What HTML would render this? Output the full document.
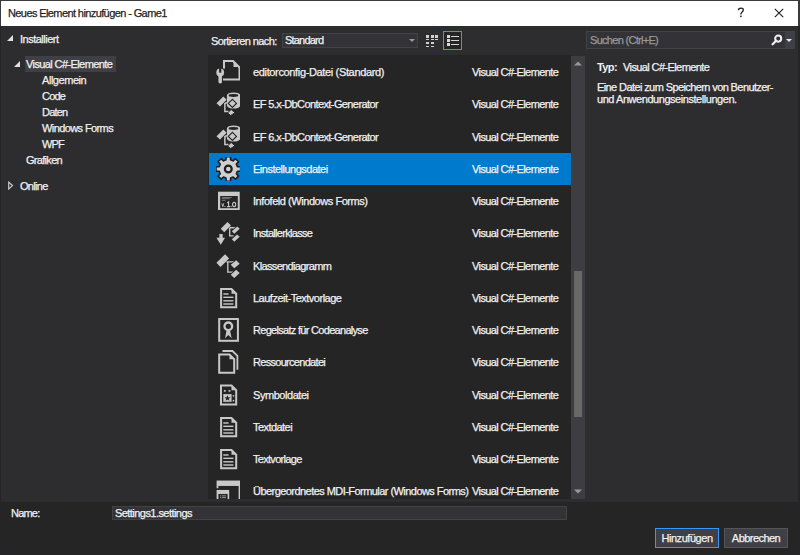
<!DOCTYPE html>
<html><head><meta charset="utf-8"><style>
*{box-sizing:border-box;margin:0;padding:0}
html,body{width:800px;height:555px;overflow:hidden;background:#2D2D30}
body{position:relative;font-family:"Liberation Sans",sans-serif;font-size:11px;letter-spacing:-0.5px;color:#F1F1F1;-webkit-text-stroke:0.25px currentColor}
.a{position:absolute;white-space:nowrap;line-height:14px}
#frame{position:absolute;left:0;top:0;width:800px;height:555px;border:1px solid #252527;border-right-width:2px;pointer-events:none}
#title{position:absolute;left:1px;top:1px;width:797px;height:25px;background:#FFFFFF}
#title .t{position:absolute;left:7px;top:5px;color:#1E1E1E;line-height:14px}
#list{position:absolute;left:208px;top:55px;width:363px;height:444px;background:#252526;overflow:hidden}
.row{position:absolute;left:0;width:363px;height:32.25px}
.row.sel{background:#007ACC;left:1px;width:362px}
.ico{position:absolute;left:8px;top:4px}
.row.sel .ico{left:7px}
.nm{position:absolute;left:45px;top:9px;line-height:14px;white-space:nowrap;letter-spacing:-0.45px}
.row.sel .nm{left:44px}
.cat{position:absolute;left:264px;top:9px;line-height:14px;white-space:nowrap;letter-spacing:-0.45px}
.row.sel .cat{left:263px}
#sb{position:absolute;left:571px;top:56px;width:14px;height:443px;background:#3E3E42}
#thumb{position:absolute;left:3px;top:215px;width:8px;height:146px;background:#686868}
#bottom{position:absolute;left:1px;top:502px;width:797px;height:52px;background:#252526}
.box{position:absolute;background:#333337;border:1px solid #434346}
.btn{position:absolute;background:#3F3F46;border:1px solid #555555;text-align:center;line-height:18px;color:#F1F1F1}
</style></head><body>
<div id="title"><span class="t" style="letter-spacing:-0.6px">Neues Element hinzufügen - Game1</span>
<svg style="position:absolute;left:736px;top:6px" width="8" height="11" viewBox="0 0 8 11"><path d="M1.4,3.3 Q1.5,1.1 3.9,1.1 Q6.3,1.1 6.3,3.1 Q6.3,4.3 4.9,5.2 Q3.9,5.9 3.9,7.4" fill="none" stroke="#1E1E1E" stroke-width="1.3"/><rect x="3.15" y="8.6" width="1.5" height="1.5" fill="#1E1E1E"/></svg>
<svg style="position:absolute;left:772px;top:6px" width="11" height="11" viewBox="0 0 11 11"><path d="M1.8,1.8 L10.2,10.2 M10.2,1.8 L1.8,10.2" stroke="#1E1E1E" stroke-width="1.1"/></svg>
</div>

<!-- tree -->
<svg style="position:absolute;left:7px;top:35px" width="7" height="7" viewBox="0 0 7 7"><polygon points="6,0 6,6 0,6" fill="#E0E0E0"/></svg>
<span class="a" style="letter-spacing:-0.5px;left:20px;top:32px">Installiert</span>
<div style="position:absolute;left:25px;top:56px;width:91px;height:16px;background:#3F3F46"></div>
<svg style="position:absolute;left:14px;top:61px" width="7" height="7" viewBox="0 0 7 7"><polygon points="6,0 6,6 0,6" fill="#E0E0E0"/></svg>
<span class="a" style="letter-spacing:-0.6px;left:26px;top:57px">Visual C#-Elemente</span>
<span class="a" style="letter-spacing:-0.45px;left:42px;top:73px">Allgemein</span>
<span class="a" style="letter-spacing:-0.8px;left:42px;top:89px">Code</span>
<span class="a" style="letter-spacing:-0.8px;left:42px;top:105px">Daten</span>
<span class="a" style="letter-spacing:-0.6px;left:42px;top:121px">Windows Forms</span>
<span class="a" style="letter-spacing:-0.8px;left:42px;top:137px">WPF</span>
<span class="a" style="letter-spacing:-0.7px;left:26px;top:153px">Grafiken</span>
<svg style="position:absolute;left:8px;top:181px" width="6" height="9" viewBox="0 0 6 9"><polygon points="0.7,1.2 4.5,4.6 0.7,8" fill="none" stroke="#C8C8C8" stroke-width="1.2"/></svg>
<span class="a" style="letter-spacing:-0.7px;left:20px;top:179px">Online</span>

<!-- toolbar -->
<span class="a" style="letter-spacing:-0.6px;left:211px;top:34px">Sortieren nach:</span>
<div class="box" style="left:282px;top:33px;width:136px;height:15px"></div>
<span class="a" style="letter-spacing:-0.8px;left:285px;top:33px">Standard</span>
<svg style="position:absolute;left:409px;top:39px" width="6" height="4" viewBox="0 0 6 4"><polygon points="0,0 6,0 3,3" fill="#999999"/></svg>
<svg style="position:absolute;left:424px;top:32px" width="16" height="17" viewBox="0 0 16 17" shape-rendering="crispEdges">
<g fill="#D0D0D0"><rect x="2" y="3" width="3" height="3"/><rect x="7" y="3" width="3" height="3"/><rect x="11" y="3" width="3" height="3"/>
<rect x="2" y="7" width="3" height="1"/><rect x="7" y="7" width="3" height="1"/><rect x="11" y="7" width="3" height="1"/>
<rect x="2" y="10" width="3" height="2"/><rect x="7" y="10" width="3" height="2"/>
<rect x="2" y="14" width="3" height="1"/><rect x="7" y="14" width="3" height="1"/></g></svg>
<div style="position:absolute;left:443px;top:31px;width:19px;height:19px;border:1px solid #3399FF;background:#252526"></div>
<svg style="position:absolute;left:443px;top:31px" width="19" height="19" viewBox="0 0 19 19" shape-rendering="crispEdges">
<g fill="#D8D8D8"><rect x="4" y="4" width="3" height="3"/><rect x="4" y="8" width="3" height="3"/><rect x="4" y="12" width="3" height="3"/>
<rect x="8" y="5" width="8" height="1"/><rect x="8" y="9" width="8" height="1"/><rect x="8" y="13" width="8" height="1"/></g></svg>

<!-- search -->
<div class="box" style="left:586px;top:31px;width:209px;height:18px"></div>
<div style="position:absolute;left:785px;top:32px;width:10px;height:16px;background:#3F3F46"></div>
<span class="a" style="letter-spacing:-0.7px;left:590px;top:33px;color:#999999">Suchen (Ctrl+E)</span>
<svg style="position:absolute;left:770px;top:34px" width="14" height="13" viewBox="0 0 14 13"><circle cx="8.2" cy="4.6" r="3.05" fill="none" stroke="#F0F0F0" stroke-width="2"/><path d="M6.1,6.7 L2.6,10.2" stroke="#F0F0F0" stroke-width="2.3" stroke-linecap="round"/></svg>
<svg style="position:absolute;left:786px;top:39px" width="6" height="3" viewBox="0 0 6 3"><polygon points="0,0 6,0 3,3" fill="#E8E8E8"/></svg>

<div id="list">
<div class="row" style="top:1.00px"><svg class="ico" width="24" height="24" viewBox="0 0 24 24"><path d="M8,1 H17 L23.5,7.5 V19.5 H8 Z" fill="none" stroke="#C8C8C8" stroke-width="2"/><path d="M17.5,2 V7 H22.5 Z" fill="#C8C8C8"/><rect x="6.8" y="8.6" width="2.4" height="9.9" fill="#252526"/><g fill="#252526" stroke="#252526" stroke-width="2"><circle cx="4.2" cy="12.5" r="3.9"/><path d="M2.45,14 H5.95 V22.4 Q4.2,24.6 2.45,22.4 Z"/></g><g fill="#C8C8C8"><circle cx="4.2" cy="12.5" r="3.9"/><path d="M2.45,14 H5.95 V22.4 Q4.2,24.6 2.45,22.4 Z"/></g><rect x="3.1" y="7.5" width="2.2" height="5.2" fill="#252526"/></svg><span class="nm" style="letter-spacing:-0.35px">editorconfig-Datei (Standard)</span><span class="cat" style="letter-spacing:-0.6px">Visual C#-Elemente</span></div><div class="row" style="top:33.25px"><svg class="ico" width="24" height="24" viewBox="0 0 24 24"><path d="M10.9,3.4 A6.7,3 0 0 1 24.3,3.4 V13.6 A6.7,2.9 0 0 1 10.9,13.6 Z" fill="#C8C8C8"/><ellipse cx="17.45" cy="3.45" rx="4.8" ry="1.45" fill="#252526"/><polygon points="0.53,11.13 7.34,4.57 10.63,7.85 4.06,14.42" fill="#C8C8C8"/><path d="M8.86,11.1 H12.6 M8.86,11.1 V19.47 H12.65" fill="none" stroke="#C8C8C8" stroke-width="1.5"/><polygon points="12.3,11.4 16.4,7.3 20.5,11.4 16.4,15.5" fill="#C8C8C8" stroke="#252526" stroke-width="1.1"/><polygon points="11.64,20.98 15.17,17.45 18.96,20.73 14.67,23.51" fill="#C8C8C8" stroke="#252526" stroke-width="0.9"/></svg><span class="nm" style="letter-spacing:-0.6px">EF 5.x-DbContext-Generator</span><span class="cat" style="letter-spacing:-0.6px">Visual C#-Elemente</span></div><div class="row" style="top:65.50px"><svg class="ico" width="24" height="24" viewBox="0 0 24 24"><path d="M10.9,3.4 A6.7,3 0 0 1 24.3,3.4 V13.6 A6.7,2.9 0 0 1 10.9,13.6 Z" fill="#C8C8C8"/><ellipse cx="17.45" cy="3.45" rx="4.8" ry="1.45" fill="#252526"/><polygon points="0.53,11.13 7.34,4.57 10.63,7.85 4.06,14.42" fill="#C8C8C8"/><path d="M8.86,11.1 H12.6 M8.86,11.1 V19.47 H12.65" fill="none" stroke="#C8C8C8" stroke-width="1.5"/><polygon points="12.3,11.4 16.4,7.3 20.5,11.4 16.4,15.5" fill="#C8C8C8" stroke="#252526" stroke-width="1.1"/><polygon points="11.64,20.98 15.17,17.45 18.96,20.73 14.67,23.51" fill="#C8C8C8" stroke="#252526" stroke-width="0.9"/></svg><span class="nm" style="letter-spacing:-0.6px">EF 6.x-DbContext-Generator</span><span class="cat" style="letter-spacing:-0.6px">Visual C#-Elemente</span></div><div class="row sel" style="top:97.75px"><svg class="ico" width="24" height="24" viewBox="0 0 24 24"><path d="M9.97,2.84 L10.12,-0.36 L14.48,-0.36 L14.63,2.84 L17.10,3.87 L19.46,1.71 L22.54,4.79 L20.38,7.15 L21.41,9.62 L24.61,9.77 L24.61,14.13 L21.41,14.28 L20.38,16.75 L22.54,19.11 L19.46,22.19 L17.10,20.03 L14.63,21.06 L14.48,24.26 L10.12,24.26 L9.97,21.06 L7.50,20.03 L5.14,22.19 L2.06,19.11 L4.22,16.75 L3.19,14.28 L-0.01,14.13 L-0.01,9.77 L3.19,9.62 L4.22,7.15 L2.06,4.79 L5.14,1.71 L7.50,3.87 Z" fill="#D0D0D0" stroke="#1E1E1E" stroke-width="1.6" stroke-linejoin="round"/><circle cx="12.3" cy="11.95" r="3.4" fill="#D0D0D0" stroke="#1E1E1E" stroke-width="2.2"/></svg><span class="nm" style="letter-spacing:-0.5px">Einstellungsdatei</span><span class="cat" style="letter-spacing:-0.6px">Visual C#-Elemente</span></div><div class="row" style="top:130.00px"><svg class="ico" width="24" height="24" viewBox="0 0 24 24"><rect x="2" y="2.7" width="21.7" height="18.3" fill="#C8C8C8"/><rect x="4.2" y="7" width="17.6" height="12.2" fill="#252526"/><g fill="#C8C8C8" opacity="0.7"><rect x="5.8" y="8" width="10" height="0.7"/><rect x="5.8" y="9.4" width="8" height="0.7"/><rect x="5.8" y="10.9" width="3.8" height="0.7"/></g><path d="M5.9,14.4 L6.8,17.7 L7.7,14.4" fill="none" stroke="#C8C8C8" stroke-width="0.9"/><rect x="8.5" y="17" width="0.9" height="1" fill="#C8C8C8"/><path d="M11.2,14 L12.6,12.9 V17.7 M11,17.6 H14.2" fill="none" stroke="#C8C8C8" stroke-width="1.1"/><rect x="14.75" y="17" width="0.9" height="1" fill="#C8C8C8"/><ellipse cx="18.15" cy="15.4" rx="1.55" ry="2.2" fill="none" stroke="#C8C8C8" stroke-width="1.1"/></svg><span class="nm" style="letter-spacing:-0.45px">Infofeld (Windows Forms)</span><span class="cat" style="letter-spacing:-0.6px">Visual C#-Elemente</span></div><div class="row" style="top:162.25px"><svg class="ico" width="24" height="24" viewBox="0 0 24 24"><polygon points="4.76,7.83 11.51,1.07 15.03,4.59 8.27,11.34" fill="#C8C8C8"/><path d="M13.7,6.75 H20.7 M13.7,6.75 V14.86 H17.5" fill="none" stroke="#C8C8C8" stroke-width="1.35"/><polygon points="15.84,10.26 21.24,5.4 23.68,7.83 18.27,12.7" fill="#C8C8C8" stroke="#252526" stroke-width="1.6" paint-order="stroke"/><polygon points="15.84,18.37 20.97,13.5 23.68,15.67 18.27,20.8" fill="#C8C8C8" stroke="#252526" stroke-width="1.6" paint-order="stroke"/><path d="M3.4,12.97 H6.65 V16.75 H9.08 L4.76,23.8 L0.43,16.75 H3.4 Z" fill="#C8C8C8"/></svg><span class="nm" style="letter-spacing:-0.7px">Installerklasse</span><span class="cat" style="letter-spacing:-0.6px">Visual C#-Elemente</span></div><div class="row" style="top:194.50px"><svg class="ico" width="24" height="24" viewBox="0 0 24 24"><polygon points="0.43,8.66 9.08,0.28 13.14,4.61 4.49,12.99" fill="#C8C8C8"/><path d="M10.4,7.85 H19.1 M11.8,7.85 V18.1 H17.5" fill="none" stroke="#C8C8C8" stroke-width="1.35"/><polygon points="14.76,10.82 20.16,6.23 23.68,9.74 18.27,14.34" fill="#C8C8C8" stroke="#252526" stroke-width="1.6" paint-order="stroke"/><polygon points="14.76,20.82 20.16,15.69 23.68,18.93 18.27,24.07" fill="#C8C8C8" stroke="#252526" stroke-width="1.6" paint-order="stroke"/></svg><span class="nm" style="letter-spacing:-0.65px">Klassendiagramm</span><span class="cat" style="letter-spacing:-0.6px">Visual C#-Elemente</span></div><div class="row" style="top:226.75px"><svg class="ico" width="24" height="24" viewBox="0 0 24 24"><path d="M5.1,3 H15.5 L20.2,7.7 V21.3 H5.1 Z" fill="none" stroke="#C8C8C8" stroke-width="2"/><path d="M15.5,3.5 V7.7 H19.7 Z" fill="#C8C8C8"/><rect x="7.3" y="7.3" width="5.3" height="1.4" fill="#C8C8C8"/><rect x="7.3" y="10.6" width="10.1" height="1.4" fill="#C8C8C8"/><rect x="7.3" y="14.1" width="10.1" height="1.4" fill="#C8C8C8"/><rect x="7.3" y="17.3" width="10.1" height="1.4" fill="#C8C8C8"/></svg><span class="nm" style="letter-spacing:-0.5px">Laufzeit-Textvorlage</span><span class="cat" style="letter-spacing:-0.6px">Visual C#-Elemente</span></div><div class="row" style="top:259.00px"><svg class="ico" width="24" height="24" viewBox="0 0 24 24"><rect x="3.2" y="1" width="18.7" height="21.8" fill="none" stroke="#C8C8C8" stroke-width="2"/><path d="M10.6,12 L9,20.3 L12.3,17.1 L15.6,20.3 L14,12 Z" fill="#C8C8C8"/><circle cx="12.3" cy="8.3" r="3.8" fill="none" stroke="#C8C8C8" stroke-width="2.3"/></svg><span class="nm" style="letter-spacing:-0.7px">Regelsatz für Codeanalyse</span><span class="cat" style="letter-spacing:-0.6px">Visual C#-Elemente</span></div><div class="row" style="top:291.25px"><svg class="ico" width="24" height="24" viewBox="0 0 24 24"><path d="M6.5,1 H16.5 L21.4,5.9 V19.75" fill="none" stroke="#C8C8C8" stroke-width="1.8"/><path d="M3.2,4.5 H13.5 L18.2,9.2 V22.75 H3.2 Z" fill="#252526" stroke="#C8C8C8" stroke-width="2"/><path d="M13.5,5 V9.2 H17.7 Z" fill="#C8C8C8"/></svg><span class="nm" style="letter-spacing:-0.7px">Ressourcendatei</span><span class="cat" style="letter-spacing:-0.6px">Visual C#-Elemente</span></div><div class="row" style="top:323.50px"><svg class="ico" width="24" height="24" viewBox="0 0 24 24"><path d="M5,2.5 H15.5 L20.2,7.2 V21.4 H5 Z" fill="none" stroke="#C8C8C8" stroke-width="2"/><path d="M15.5,3 V7.2 H19.7 Z" fill="#C8C8C8"/><rect x="7.9" y="7" width="1.8" height="1.7" fill="#C8C8C8"/><rect x="12.6" y="7" width="1.8" height="1.7" fill="#C8C8C8"/><rect x="7.3" y="11.1" width="8.3" height="7.7" fill="#C8C8C8"/><polygon points="11.45,12.2 12.3,14.3 14.5,14.4 12.8,15.7 13.4,17.8 11.45,16.6 9.5,17.8 10.1,15.7 8.4,14.4 10.6,14.3" fill="#252526"/><rect x="16.7" y="12.1" width="1.5" height="1.5" fill="#C8C8C8"/><rect x="16.7" y="16.9" width="1.5" height="1.5" fill="#C8C8C8"/></svg><span class="nm" style="letter-spacing:-0.45px">Symboldatei</span><span class="cat" style="letter-spacing:-0.6px">Visual C#-Elemente</span></div><div class="row" style="top:355.75px"><svg class="ico" width="24" height="24" viewBox="0 0 24 24"><path d="M5.1,3 H15.5 L20.2,7.7 V21.3 H5.1 Z" fill="none" stroke="#C8C8C8" stroke-width="2"/><path d="M15.5,3.5 V7.7 H19.7 Z" fill="#C8C8C8"/><rect x="7.3" y="7.3" width="5.3" height="1.4" fill="#C8C8C8"/><rect x="7.3" y="10.6" width="10.1" height="1.4" fill="#C8C8C8"/><rect x="7.3" y="14.1" width="10.1" height="1.4" fill="#C8C8C8"/><rect x="7.3" y="17.3" width="10.1" height="1.4" fill="#C8C8C8"/></svg><span class="nm" style="letter-spacing:-0.55px">Textdatei</span><span class="cat" style="letter-spacing:-0.6px">Visual C#-Elemente</span></div><div class="row" style="top:388.00px"><svg class="ico" width="24" height="24" viewBox="0 0 24 24"><path d="M5.1,3 H15.5 L20.2,7.7 V21.3 H5.1 Z" fill="none" stroke="#C8C8C8" stroke-width="2"/><path d="M15.5,3.5 V7.7 H19.7 Z" fill="#C8C8C8"/><rect x="7.3" y="7.3" width="5.3" height="1.4" fill="#C8C8C8"/><rect x="7.3" y="10.6" width="10.1" height="1.4" fill="#C8C8C8"/><rect x="7.3" y="14.1" width="10.1" height="1.4" fill="#C8C8C8"/><rect x="7.3" y="17.3" width="10.1" height="1.4" fill="#C8C8C8"/></svg><span class="nm" style="letter-spacing:-0.7px">Textvorlage</span><span class="cat" style="letter-spacing:-0.6px">Visual C#-Elemente</span></div><div class="row" style="top:420.25px"><svg class="ico" width="24" height="24" viewBox="0 0 24 24"><rect x="0.6" y="1.55" width="23.9" height="23" fill="#C8C8C8"/><rect x="2.4" y="6.95" width="20.2" height="18" fill="#252526"/><rect x="-1" y="9.25" width="15.6" height="16" fill="#252526"/><rect x="0.6" y="10.95" width="12.6" height="14" fill="#C8C8C8"/><rect x="2.4" y="14.95" width="9.2" height="10" fill="#252526"/><g fill="#C8C8C8" opacity="0.75"><rect x="4" y="16.4" width="0.9" height="0.9"/><rect x="5.7" y="16.4" width="4.2" height="0.9"/><rect x="4" y="18.2" width="0.9" height="0.9"/><rect x="5.7" y="18.2" width="4.2" height="0.9"/></g></svg><span class="nm" style="letter-spacing:-0.55px">Übergeordnetes MDI-Formular (Windows Forms)</span><span class="cat" style="letter-spacing:-0.6px">Visual C#-Elemente</span></div>
</div>
<div id="sb"><div id="thumb"></div>
<svg style="position:absolute;left:3px;top:5px" width="8" height="5" viewBox="0 0 8 5"><polygon points="0,4.5 8,4.5 4,0.5" fill="#999999"/></svg>
<svg style="position:absolute;left:3px;top:433px" width="8" height="5" viewBox="0 0 8 5"><polygon points="0,0.5 8,0.5 4,4.5" fill="#999999"/></svg>
</div>

<!-- details -->
<span class="a" style="left:597px;top:60px;font-weight:bold;-webkit-text-stroke:0;letter-spacing:-0.6px">Typ:</span>
<span class="a" style="letter-spacing:-0.6px;left:623px;top:60px">Visual C#-Elemente</span>
<span class="a" style="letter-spacing:-0.6px;left:597px;top:80px">Eine Datei zum Speichern von Benutzer-</span>
<span class="a" style="letter-spacing:-0.45px;left:597px;top:92px">und Anwendungseinstellungen.</span>

<div id="bottom"></div>
<span class="a" style="letter-spacing:-0.8px;left:11px;top:506px">Name:</span>
<div class="box" style="left:112px;top:506px;width:455px;height:14px"></div>
<span class="a" style="letter-spacing:-0.55px;left:115px;top:506px">Settings1.settings</span>
<div class="btn" style="letter-spacing:-0.45px;left:655px;top:528px;width:64px;height:20px;border-color:#3399FF">Hinzufügen</div>
<div class="btn" style="letter-spacing:-0.55px;left:724px;top:528px;width:64px;height:20px">Abbrechen</div>
<div id="frame"></div>
<div style="position:absolute;left:0;top:0;width:800px;height:1px;background:#3A3A3A"></div>
<div style="position:absolute;left:0;top:0;width:1px;height:26px;background:#3A3A3A"></div>
<div style="position:absolute;left:798px;top:0;width:2px;height:26px;background:#3A3A3A"></div>
</body></html>
